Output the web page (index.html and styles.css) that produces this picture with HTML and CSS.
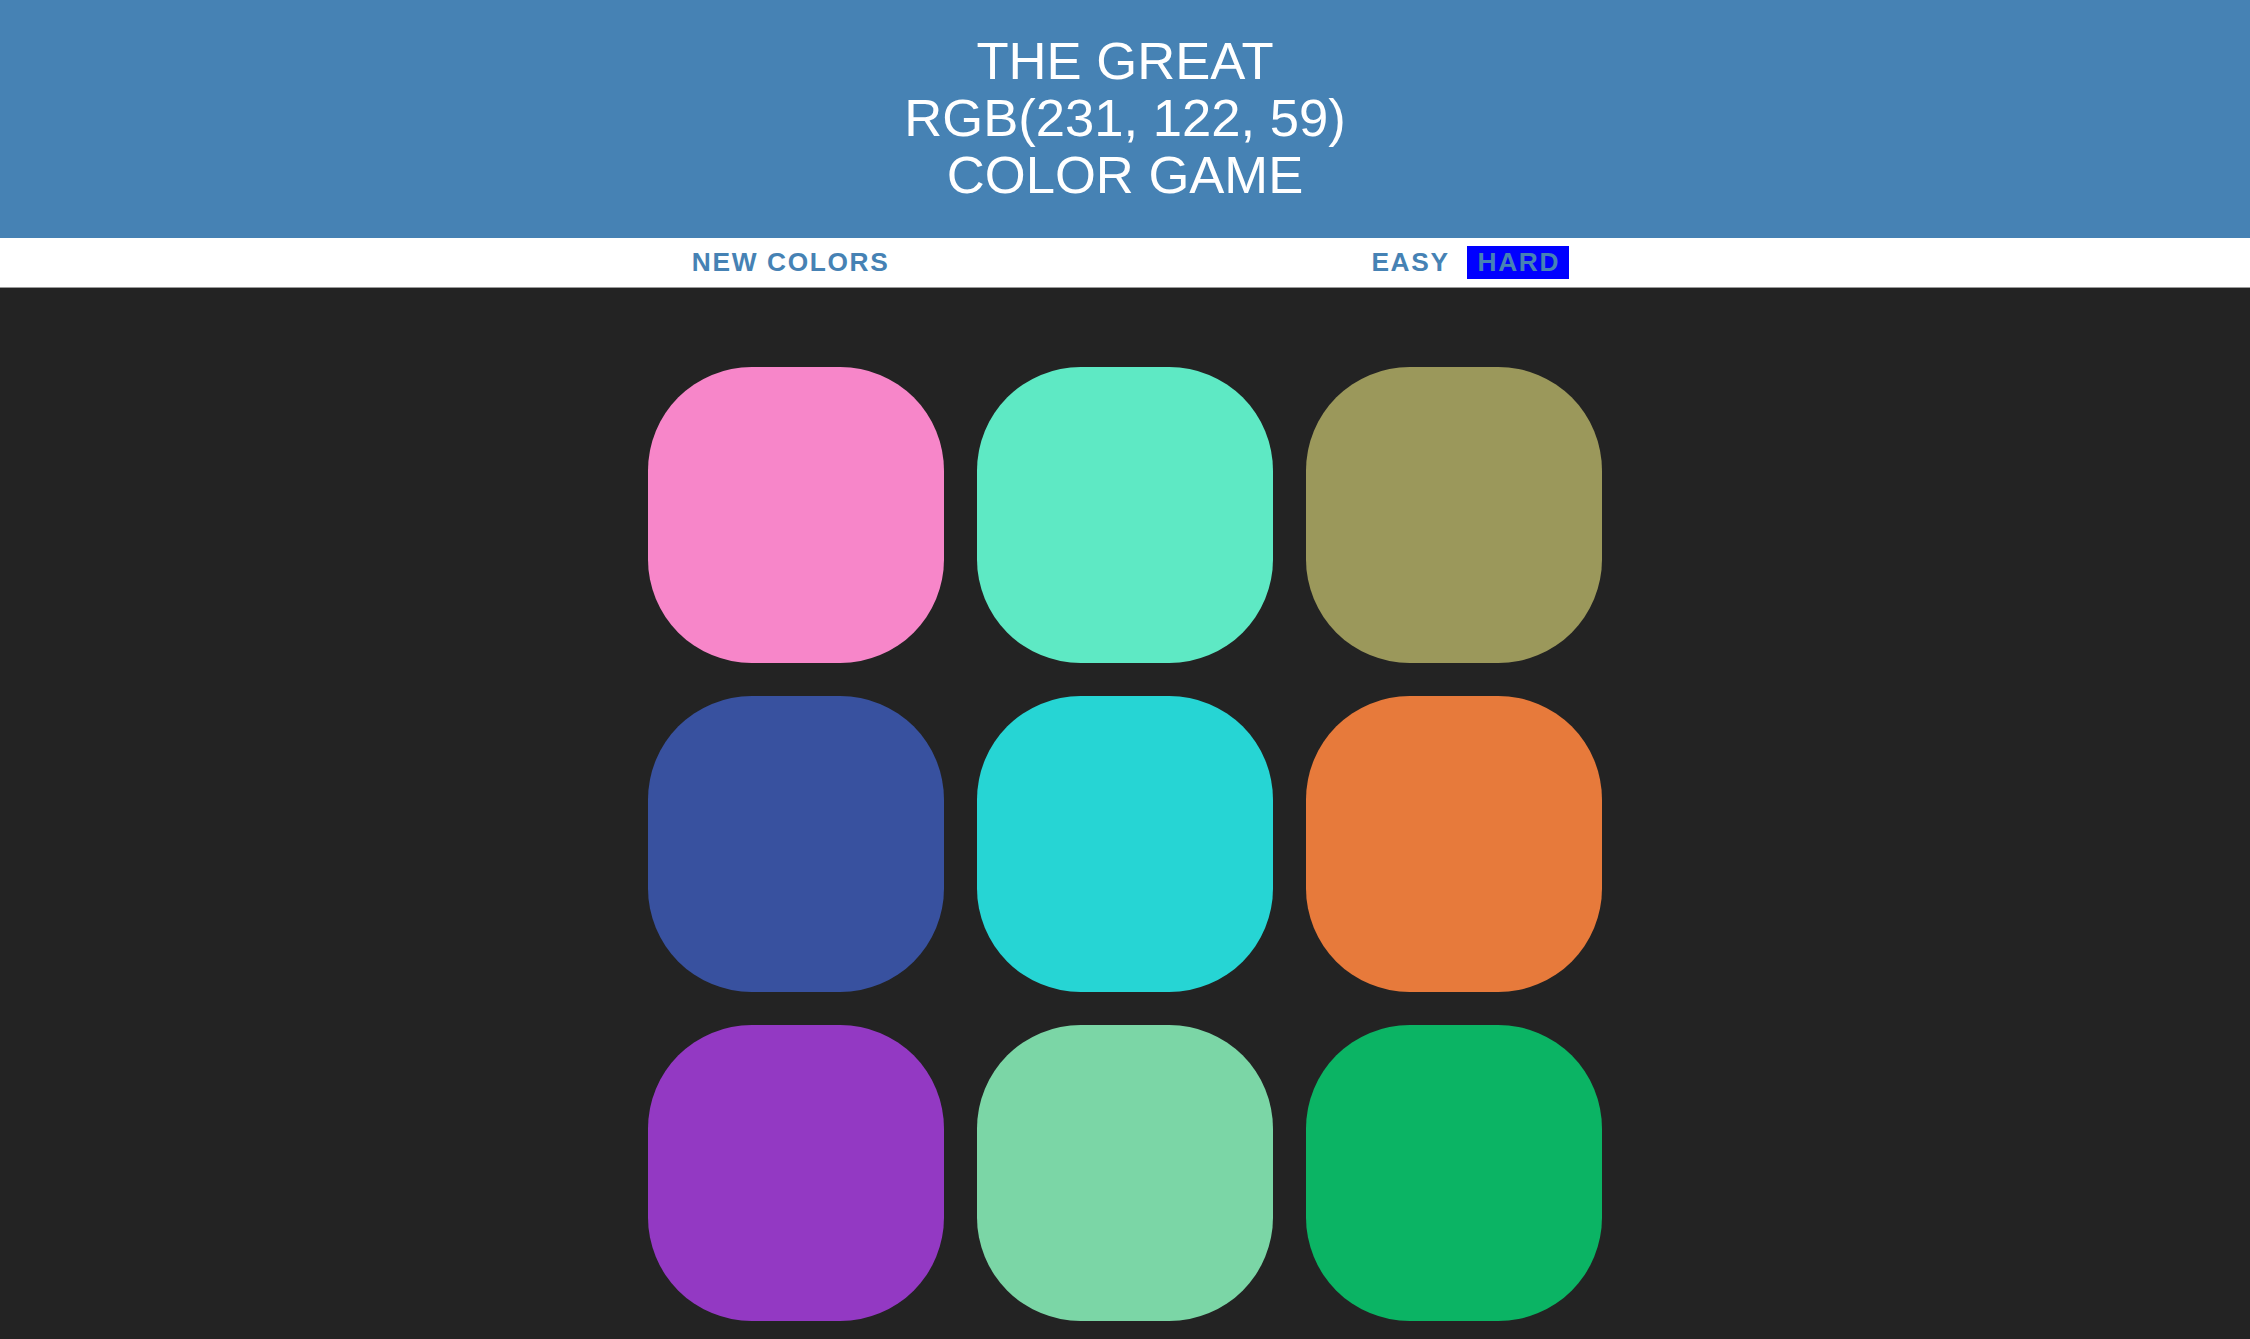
FILE: index.html
```
<!DOCTYPE html>
<html>
<head>
<meta charset="utf-8">
<title>Color Game</title>
<link rel="stylesheet" href="styles.css">
</head>
<body>
<h1 class="title">THE GREAT<br><span class="target">RGB(231, 122, 59)</span><br>COLOR GAME</h1>
<div class="stripe">
  <button class="btn reset">NEW COLORS</button>
  <span class="message"></span>
  <button class="btn mode">EASY</button>
  <button class="btn mode selected">HARD</button>
</div>
<div class="board">
  <div class="square sq1"></div>
  <div class="square sq2"></div>
  <div class="square sq3"></div>
  <div class="square sq4"></div>
  <div class="square sq5"></div>
  <div class="square sq6"></div>
  <div class="square sq7"></div>
  <div class="square sq8"></div>
  <div class="square sq9"></div>
</div>
</body>
</html>
```
FILE: styles.css
```
html, body {
  margin: 0;
  padding: 0;
}
body {
  background: #232323;
  font-family: "Liberation Sans", Arial, sans-serif;
}
.title {
  margin: 0;
  box-sizing: border-box;
  height: 238px;
  padding: 32px 0 0 0;
  background: #4682b4;
  color: #ffffff;
  font-weight: normal;
  font-size: 52.6px;
  line-height: 57px;
  text-align: center;
}
.stripe {
  height: 49px;
  background: #ffffff;
  border-bottom: 1px solid #9a9a9a;
  display: flex;
  justify-content: center;
  align-items: center;
}
.btn {
  border: none;
  background: none;
  font-family: "Liberation Sans", Arial, sans-serif;
  font-weight: bold;
  font-size: 26.3px;
  letter-spacing: 1.64px;
  color: #4682b4;
  height: 33px;
  padding: 0 9px 0 11px;
  margin: 0;
  line-height: 33px;
}
.message {
  display: inline-block;
  width: 462px;
}
.mode + .mode {
  margin-left: 8px;
}
.selected {
  background: #0000ff;
}
.board {
  display: grid;
  grid-template-columns: repeat(3, 296px);
  grid-auto-rows: 296px;
  gap: 33px;
  justify-content: center;
  padding-top: 79px;
}
.square {
  border-radius: 35%;
}
.sq1 { background: rgb(247, 134, 201); }
.sq2 { background: rgb(94, 233, 196); }
.sq3 { background: rgb(155, 152, 91); }
.sq4 { background: rgb(56, 81, 159); }
.sq5 { background: rgb(38, 213, 212); }
.sq6 { background: rgb(231, 122, 59); }
.sq7 { background: rgb(147, 57, 195); }
.sq8 { background: rgb(123, 214, 166); }
.sq9 { background: rgb(11, 180, 100); }
```
